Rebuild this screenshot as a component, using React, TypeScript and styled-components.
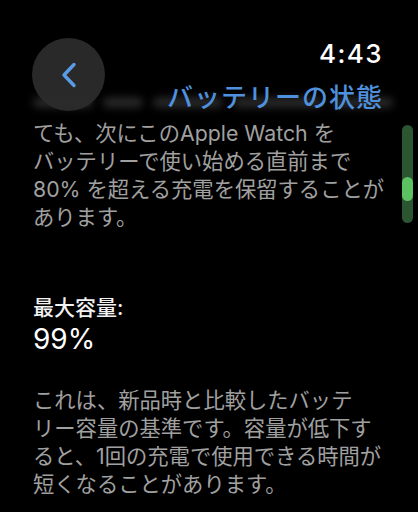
import React from "react";
import styled, { createGlobalStyle } from "styled-components";

const GlobalStyle = createGlobalStyle`
  html, body {
    margin: 0;
    padding: 0;
    background: #000;
  }
  body {
    font-family: "Inter", "Noto Sans CJK JP", sans-serif;
    -webkit-font-smoothing: antialiased;
  }
`;

const Screen = styled.div`
  position: relative;
  width: 418px;
  height: 512px;
  overflow: hidden;
  background: #000;
  font-family: "Inter", "Noto Sans CJK JP", sans-serif;
`;

const Header = styled.header`
  position: relative;
  z-index: 2;
  display: flex;
  justify-content: space-between;
  align-items: flex-start;
  padding: 38px 35px 0 32px;
`;

const BackButton = styled.button`
  width: 73px;
  height: 73px;
  margin: 0;
  padding: 0;
  border: none;
  border-radius: 50%;
  background: rgba(44, 44, 46, 0.92);
  display: flex;
  align-items: center;
  justify-content: center;
  cursor: pointer;
`;

const TitleBlock = styled.div`
  margin-top: 2px;
  display: flex;
  flex-direction: column;
  align-items: flex-end;
`;

const Time = styled.div`
  font-family: "Inter", sans-serif;
  font-size: 26px;
  line-height: 28px;
  font-weight: 500;
  color: #fff;
  letter-spacing: 1.4px;
`;

const Title = styled.h1`
  margin: 13px 0 0;
  font-family: "Noto Sans CJK JP", sans-serif;
  font-size: 26px;
  line-height: 30px;
  font-weight: 500;
  color: #4f91de;
  letter-spacing: 1px;
`;

const FadedRow = styled.div`
  position: relative;
  z-index: 1;
  margin: -16px 0 0 33px;
  height: 14px;
  display: flex;
  gap: 10px;
  align-items: center;
`;

const FadedWord = styled.span<{ $w: number }>`
  display: block;
  width: ${(p) => p.$w}px;
  height: 9px;
  border-radius: 5px;
  background: #2e2e2e;
  filter: blur(4px);
`;

const Content = styled.main`
  padding: 0 40px 0 33px;
`;

const Paragraph = styled.p<{ $top: number }>`
  margin: ${(p) => p.$top}px 0 0;
  font-size: 21.3px;
  line-height: 28px;
  font-weight: 400;
  color: #a0a0a0;
  white-space: nowrap;
`;

const Label = styled.div`
  margin-top: 64px;
  font-size: 21px;
  line-height: 26px;
  font-weight: 500;
  color: #f2f2f2;
`;

const Value = styled.div`
  margin-top: 1px;
  font-family: "Inter", sans-serif;
  font-size: 28px;
  line-height: 34px;
  font-weight: 400;
  color: #fff;
`;

const ScrollTrack = styled.div`
  position: absolute;
  top: 125px;
  left: 402px;
  width: 11px;
  height: 98px;
  border-radius: 6px;
  background: #2c5532;
`;

const ScrollThumb = styled.div`
  position: absolute;
  top: 52px;
  left: 0;
  width: 11px;
  height: 24px;
  border-radius: 6px;
  background: #5cc261;
`;

export default function App() {
  return (
    <Screen>
      <GlobalStyle />
      <Header>
        <BackButton aria-label="戻る">
          <svg width="18" height="26" viewBox="0 0 18 26" fill="none">
            <path
              d="M14 2.5 L4 13 L14 23.5"
              stroke="#5a9be6"
              strokeWidth="3.4"
              strokeLinecap="round"
              strokeLinejoin="round"
            />
          </svg>
        </BackButton>
        <TitleBlock>
          <Time>4:43</Time>
          <Title>バッテリーの状態</Title>
        </TitleBlock>
      </Header>
      <FadedRow aria-hidden="true">
        <FadedWord $w={60} />
        <FadedWord $w={40} />
        <FadedWord $w={70} />
        <FadedWord $w={90} />
        <FadedWord $w={60} />
      </FadedRow>
      <Content>
        <Paragraph $top={10}>
          ても、次にこのApple Watch を
          <br />
          バッテリーで使い始める直前まで
          <br />
          80% を超える充電を保留することが
          <br />
          あります。
        </Paragraph>
        <Label>最大容量:</Label>
        <Value>99%</Value>
        <Paragraph $top={30}>
          これは、新品時と比較したバッテ
          <br />
          リー容量の基準です。容量が低下す
          <br />
          ると、1回の充電で使用できる時間が
          <br />
          短くなることがあります。
        </Paragraph>
      </Content>
      <ScrollTrack>
        <ScrollThumb />
      </ScrollTrack>
    </Screen>
  );
}
